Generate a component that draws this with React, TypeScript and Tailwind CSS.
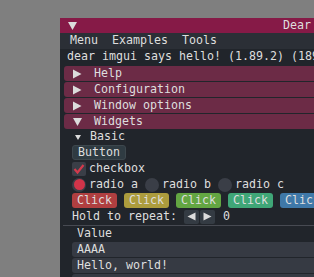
import React from "react";

const font = { fontFamily: '"DejaVu Sans Mono", "Liberation Mono", monospace' };

function RightTri({ className = "" }: { className?: string }) {
  return (
    <svg width="10" height="10" viewBox="0 0 10 10" className={className}>
      <polygon points="1,0.5 9.5,5 1,9.5" fill="#dcdcdc" />
    </svg>
  );
}
function DownTri({ w = 10, h = 8 }: { w?: number; h?: number }) {
  return (
    <svg width={w} height={h} viewBox={`0 0 ${w} ${h}`}>
      <polygon points={`0,0 ${w},0 ${w / 2},${h}`} fill="#dcdcdc" />
    </svg>
  );
}

function Header({ label, open = false }: { label: string; open?: boolean }) {
  return (
    <div className="ml-[4px] h-[15px] rounded-[3px] bg-[#6c2b46] flex items-center pl-[8px]">
      <div className="w-[10px] flex items-center justify-center">
        {open ? <DownTri w={9} h={8} /> : <RightTri />}
      </div>
      <span className="ml-[12px] leading-none">{label}</span>
    </div>
  );
}

const clickColors = ["bg-[#b03f40]", "bg-[#ac9c3d]", "bg-[#63a642]", "bg-[#3fa677]", "bg-[#3f78a8]", "bg-[#5a3fa8]", "bg-[#a83f8e]"];

export default function App() {
  return (
    <div className="w-[314px] h-[277px] bg-[#7f7f7f] overflow-hidden pl-[60px] pt-[18px] text-[#dedede] text-[11.63px]" style={font}>
      <div className="w-[551px] h-[300px] bg-[#21252b] flex flex-col">
        {/* Title bar */}
        <div className="h-[15px] bg-[#861a47] flex items-center relative">
          <div className="ml-[8px] flex items-center">
            <DownTri w={9} h={8} />
          </div>
          <span className="absolute left-[223px] leading-none">Dear ImGui Demo</span>
        </div>
        {/* Menu bar */}
        <div className="h-[16px] bg-[#2b2f36] flex items-center pl-[10px] gap-[14px] leading-none">
          <span>Menu</span>
          <span>Examples</span>
          <span>Tools</span>
        </div>
        {/* hello */}
        <div className="h-[16px] flex items-center pl-[7px] leading-none whitespace-nowrap">
          dear imgui says hello! (1.89.2) (18920)
        </div>
        <div className="flex flex-col gap-px mt-px">
          <Header label="Help" />
          <Header label="Configuration" />
          <Header label="Window options" />
          <Header label="Widgets" open />
          {/* Basic */}
          <div className="h-[14px] flex items-center pl-[15px] leading-none">
            <DownTri w={6} h={5} />
            <span className="ml-[9px]">Basic</span>
          </div>
        </div>
        <div className="flex flex-col gap-px pl-[12px] mt-px">
          {/* Button */}
          <div className="h-[15px] flex items-center">
            <div className="h-[15px] px-[5px] rounded-[3px] bg-[#2f3b42] border border-[#3d474d] flex items-center leading-none">
              Button
            </div>
          </div>
          {/* checkbox */}
          <div className="h-[15px] flex items-center">
            <div className="w-[14px] h-[14px] rounded-[2px] bg-[#3a3e47] flex items-center justify-center">
              <svg width="14" height="14" viewBox="0 0 14 14">
                <polyline points="2.5,7 5.5,10.5 11.5,3" fill="none" stroke="#d23a4c" strokeWidth="2.2" />
              </svg>
            </div>
            <span className="ml-[3px] leading-none">checkbox</span>
          </div>
          {/* radios */}
          <div className="h-[15px] flex items-center gap-[7px]">
            <div className="flex items-center">
              <div className="w-[14px] h-[14px] rounded-full bg-[#3a3e47] flex items-center justify-center">
                <div className="w-[11px] h-[11px] rounded-full bg-[#d13449]" />
              </div>
              <span className="ml-[3px] leading-none">radio a</span>
            </div>
            <div className="flex items-center">
              <div className="w-[14px] h-[14px] rounded-full bg-[#3a3e47]" />
              <span className="ml-[3px] leading-none">radio b</span>
            </div>
            <div className="flex items-center">
              <div className="w-[14px] h-[14px] rounded-full bg-[#3a3e47]" />
              <span className="ml-[3px] leading-none">radio c</span>
            </div>
          </div>
          {/* Click buttons */}
          <div className="h-[15px] flex items-center gap-[7px]">
            {clickColors.map((c, i) => (
              <div key={i} className={`h-[15px] w-[45px] shrink-0 rounded-[3px] ${c} flex items-center justify-center leading-none`}>
                Click
              </div>
            ))}
          </div>
          {/* Hold to repeat */}
          <div className="h-[15px] flex items-center leading-none">
            <span>Hold to repeat:</span>
            <div className="ml-[7px] flex gap-px">
              <div className="w-[15px] h-[14px] rounded-[2px] bg-[#343b43] flex items-center justify-center">
                <svg width="9" height="9" viewBox="0 0 9 9">
                  <polygon points="8.5,0.5 8.5,8.5 0.5,4.5" fill="#dcdcdc" />
                </svg>
              </div>
              <div className="w-[15px] h-[14px] rounded-[2px] bg-[#343b43] flex items-center justify-center">
                <svg width="9" height="9" viewBox="0 0 9 9">
                  <polygon points="0.5,0.5 0.5,8.5 8.5,4.5" fill="#dcdcdc" />
                </svg>
              </div>
            </div>
            <span className="ml-[8px]">0</span>
          </div>
        </div>
        {/* Separator */}
        <div className="h-px bg-[#474a52] ml-[3px] mt-px" />
        <div className="flex flex-col gap-px pl-[12px] mt-px">
          <div className="h-[14px] flex items-center pl-[5px] leading-none">Value</div>
          <div className="h-[15px] w-[358px] rounded-[3px] bg-[#363a43] flex items-center pl-[5px] leading-none">AAAA</div>
          <div className="h-[15px] w-[358px] rounded-[3px] bg-[#363a43] flex items-center pl-[5px] leading-none">Hello, world!</div>
          <div className="h-[15px] w-[358px] rounded-[3px] bg-[#363a43] flex items-center pl-[5px] leading-none"></div>
        </div>
      </div>
    </div>
  );
}
